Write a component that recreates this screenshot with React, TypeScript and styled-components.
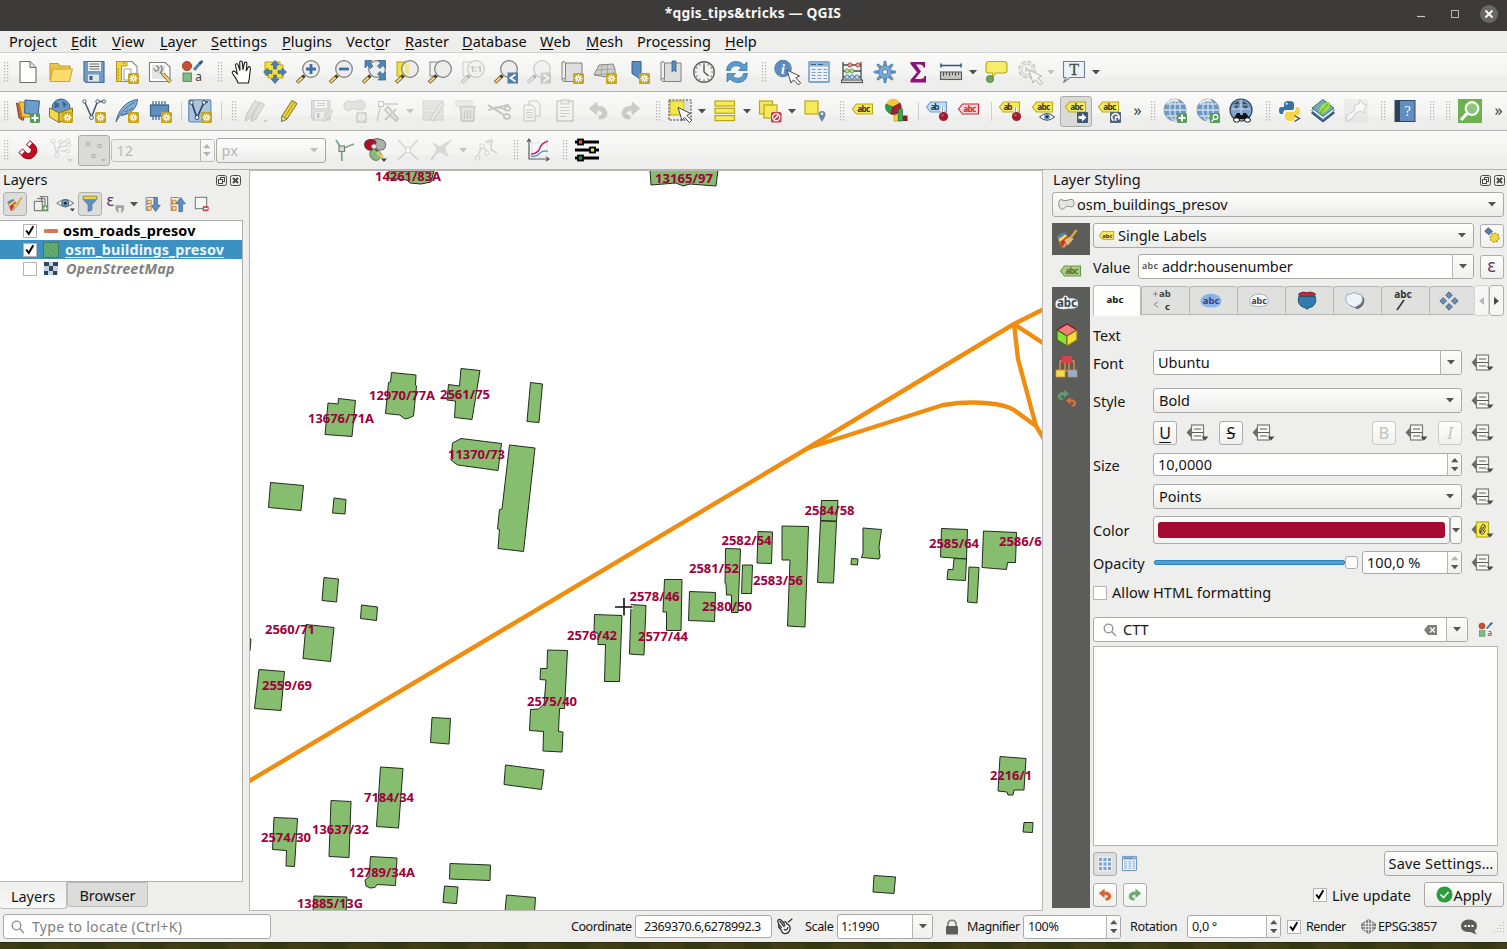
import React from "react";
import styled, { createGlobalStyle, css } from "styled-components";

const Global = createGlobalStyle`
  * { box-sizing: border-box; }
  html, body { margin: 0; padding: 0; overflow: hidden; }
  body { font-family: "Noto Sans", "Open Sans", sans-serif; font-size: 14.5px; color: #141414; background: #eeeeec; }
  svg { display: block; flex: none; overflow: visible; }
`;

/* ---------- window frame ---------- */

const Window = styled.div`
  width: 1507px;
  height: 949px;
  display: flex;
  flex-direction: column;
  background: #eeeeec;
  overflow: hidden;
`;

const TitleBar = styled.header`
  height: 31px;
  display: grid;
  grid-template-columns: 1fr auto 1fr;
  align-items: center;
  background: #3c3b39;
  color: #f6f6f4;
  padding: 0 8px 5px 0;
`;

const WindowTitle = styled.h1`
  grid-column: 2;
  margin: 0 0 0 7px;
  font-size: 13.8px;
  letter-spacing: 0.2px;
  line-height: 18px;
  font-weight: 700;
`;

const WindowButtons = styled.div`
  display: flex;
  justify-content: flex-end;
  align-items: center;
  height: 18px;
`;

const MenuBar = styled.nav`
  height: 22px;
  display: flex;
  align-items: center;
  padding: 0 0 2px 9px;
  border-bottom: 1px solid #d2d2d0;
`;

const MenuItem = styled.span<{ $w: number; $ls?: number }>`
  width: ${(p) => p.$w}px;
  white-space: nowrap;
  letter-spacing: ${(p) => p.$ls ?? 0}px;
  line-height: 20px;
  color: #0c0c0c;
  u { text-underline-offset: 2px; }
`;

/* ---------- toolbars ---------- */

const ToolBar = styled.div`
  height: 39px;
  display: flex;
  align-items: center;
  background: linear-gradient(#fafaf8, #f3f3f1 60%, #eeeeec 66%);
  border-bottom: 1px solid #b2b2b0;
`;

const Tool = styled.div<{ $pressed?: boolean; $off?: boolean }>`
  width: 33px;
  height: 32px;
  flex: none;
  display: flex;
  align-items: center;
  justify-content: center;
  ${(p) => p.$pressed && css`
    width: 32px;
    margin-right: 1px;
    height: 31px;
    background: #dadad8;
    border: 1px solid #acacaa;
    border-radius: 3px;
  `}
  > svg { opacity: ${(p) => (p.$off ? 0.36 : 1)}; ${(p) => p.$off && "filter: grayscale(1);"} }
`;

const GripSlot = styled.div<{ $first?: boolean }>`
  width: ${(p) => (p.$first ? 11.5 : 16)}px;
  padding-left: ${(p) => (p.$first ? 4 : 8)}px;
  flex: none;
`;

const ToolSeparator = styled.div`
  width: 3px;
  height: 19px;
  flex: none;
  border-left: 1px solid #cfcfcd;
  margin-left: 4px;
`;

const ArrowSlot = styled.div`
  width: 12px;
  flex: none;
  display: flex;
  justify-content: center;
  padding-right: 1px;
`;

const Overflow = styled.div`
  width: 17px;
  flex: none;
  font-size: 16px;
  line-height: 20px;
  padding: 0 0 3px 8px;
  color: #3c3c3c;
`;

const Grip = ({ first }: { first?: boolean }) => (
  <GripSlot $first={first}>
    <svg width="5" height="21" viewBox="0 0 5 21">
      {[0, 3, 6, 9, 12, 15, 18].map((y) => (
        <g key={y} fill="#b6b6b4"><rect x="0" y={y} width="1.2" height="1.4" /><rect x="3" y={y} width="1.2" height="1.4" /></g>
      ))}
    </svg>
  </GripSlot>
);

const Triangle = ({ w = 8, c = "#555553", up }: { w?: number; c?: string; up?: boolean }) => (
  <svg width={w} height={w / 2 + 0.5} viewBox="0 0 8 4.5"><path d={up ? "M0 4.5L4 0L8 4.5Z" : "M0 0L4 4.5L8 0Z"} fill={c} /></svg>
);

const Arrow = ({ off }: { off?: boolean }) => <ArrowSlot><Triangle c={off ? "#c4c4c2" : "#4c4c4a"} /></ArrowSlot>;

/* ---------- icon building blocks ---------- */

const Svg = ({ children, s = 24 }: { children?: React.ReactNode; s?: number }) => (
  <svg width={s} height={s} viewBox="0 0 24 24" fill="none">{children}</svg>
);

const Star = () => (
  <g><rect x="13" y="13" width="11" height="11" rx="1.5" fill="#c4a51c" />
    <path d="M18.5 14.5V22.5M14.5 18.5H22.5M15.7 15.7L21.3 21.3M21.3 15.7L15.7 21.3" stroke="#fff" strokeWidth="1.3" />
    <circle cx="18.5" cy="18.5" r="1" fill="#c4a51c" /></g>
);

const PlusBadge = () => (
  <g><rect x="14" y="14" width="10" height="10" rx="1.5" fill="#589a5c" /><path d="M19 15.5V22.5M15.5 19H22.5" stroke="#fff" strokeWidth="2" /></g>
);

const Lens = ({ children, fill = "#ececea" }: { children?: React.ReactNode; fill?: string }) => (
  <g><path d="M1 22.5L8.5 15.5" stroke="#4a4020" strokeWidth="3.6" /><path d="M1.3 22.2L6.5 17.4" stroke="#f3d675" strokeWidth="2.2" />
    <circle cx="15" cy="9" r="8.3" fill={fill} stroke="#7c7c7a" strokeWidth="1.2" />{children}</g>
);

const Tag = ({ fill = "#f6e95c", stroke = "#b9a81c", text = "abc", color = "#33332c" }: { fill?: string; stroke?: string; text?: string; color?: string }) => (
  <g><path d="M1.5 8L5.5 3H21.5V13H5.5Z" fill={fill} stroke={stroke} strokeWidth="1.1" />
    <text x={text === "ab" ? 10 : 12.8} y="10.9" fontSize="8.2" fontWeight="700" textAnchor="middle" textLength={text === "ab" ? 9 : 13} fill={color}>{text}</text></g>
);

const Pin = () => <g><path d="M17.5 15V8.5" stroke="#fff" strokeWidth="3.4" /><path d="M17.5 15V8.5" stroke="#999" strokeWidth="1.2" /><circle cx="18.5" cy="17.5" r="4.6" fill="#a01c2c" /><circle cx="17.4" cy="16.3" r="1.3" fill="#c85060" /></g>;

const Cursor = ({ x = 10, y = 9 }: { x?: number; y?: number }) => (
  <path transform={`translate(${x} ${y})`} d="M0 0L4 13L6.5 9.8L11.5 15L13.7 12.8L8.7 8L12.5 6Z" fill="#fff" stroke="#484846" strokeWidth="1" />
);

const Globe = ({ children }: { children?: React.ReactNode }) => (
  <Svg><circle cx="12" cy="11" r="11" fill="#6a98c8" stroke="#8e9aa6" strokeWidth="1" />
    <path d="M12 0.5V21.5M1 11H23M3.5 5H20.5M3.5 17H20.5" stroke="#d4dde6" strokeWidth="1.3" />
    <ellipse cx="12" cy="11" rx="5.3" ry="10.6" stroke="#d4dde6" strokeWidth="1.3" /><path d="M4 4Q10 0 15 2" stroke="#e9eef3" strokeWidth="2" />{children}</Svg>
);

const Palette = ({ s = 24 }: { s?: number }) => (
  <Svg s={s}><circle cx="6" cy="6" r="4.6" fill="#c8502c" stroke="#8e3a22" strokeWidth="0.8" /><path d="M13 10L20 2" stroke="#4f7fae" strokeWidth="3" />
    <path d="M18.5 3.8L21.5 1" stroke="#2f5880" strokeWidth="2.4" /><rect x="2" y="13" width="8.4" height="8.4" fill="#7fbc84" stroke="#4d8a53" strokeWidth="0.9" />
    <text x="14.2" y="21" fontSize="12" fill="#444" fontFamily="Noto Sans">a</text></Svg>
);

const Floppy = () => (
  <Svg><path d="M2 1.5H22V22.5H4L2 20.5Z" fill="#6f9cc8" stroke="#4d7098" strokeWidth="1.2" /><rect x="6" y="2" width="13" height="9" fill="#f2f2f0" />
    <path d="M7.5 4H17.5M7.5 6.5H17.5M7.5 9H17.5" stroke="#6c6c6a" strokeWidth="1" /><rect x="6" y="14.5" width="11" height="7" fill="#e4e4e2" /><rect x="7.5" y="16" width="3" height="4" fill="#3e5c7a" /></Svg>
);

const Brush = ({ s = 24 }: { s?: number }) => (
  <Svg s={s}><path d="M1 9L9 5L15 12L10 21L6 22Z" fill="#d8b06a" stroke="#9c5a30" strokeWidth="0.8" /><path d="M1 9L9 5L10.5 7L3 12Z" fill="#4d86c0" />
    <path d="M3 12L10.5 7L12 9L4.5 15Z" fill="#f0e13c" /><path d="M4.5 15L12 9L14 11L6 22Z" fill="#c8343c" /><path d="M9 13L16 9L19 12L13 19Z" fill="#e0bc78" /><path d="M15.5 11.5L22.5 2" stroke="#dca83c" strokeWidth="2.6" /></Svg>
);

const Table = ({ s = 24 }: { s?: number }) => (
  <Svg s={s}><rect x="2" y="2" width="20" height="20" rx="0.5" fill="#eaf2fa" stroke="#5c8cbc" strokeWidth="1.3" /><rect x="2.5" y="2.5" width="19" height="4" fill="#8db6de" />
    <path d="M4 4.5H9M11 4.5H16" stroke="#35608c" strokeWidth="1" /><path d="M4.5 9.5H8.5M4.5 12.5H8.5M4.5 15.5H8.5M4.5 18.5H8.5M10.5 9.5H14.5M10.5 12.5H14.5M10.5 15.5H14.5M10.5 18.5H14.5M16.5 9.5H20M16.5 12.5H20M16.5 15.5H20M16.5 18.5H20" stroke="#7c9cc0" strokeWidth="1.2" /></Svg>
);

const Undo = ({ c = "#d9622e", s = 24, flip }: { c?: string; s?: number; flip?: boolean }) => (
  <Svg s={s}><path transform={flip ? "translate(24 0) scale(-1 1)" : undefined} d="M3 9.5L11 3V7C18 7 21 10 21 14.5C21 18 18 20 13 20V16.5C15.5 16.5 16.5 15.5 16.5 14C16.5 12.3 14.5 11.8 11 11.8V16Z" fill={c} stroke={c} strokeWidth="0.6" /></Svg>
);

const Pencil = () => (
  <g><path d="M5 17L15 1.5L20 4.5L10 20L4.5 22.5Z" fill="#efd83a" stroke="#6e6a30" strokeWidth="1" /><path d="M7.5 18.5L17.5 3" stroke="#b9a326" strokeWidth="1.3" /><path d="M5 17L10 20L4.5 22.5Z" fill="#f5e3b8" stroke="#6e6a30" strokeWidth="0.8" /></g>
);

const Scroll = ({ children }: { children?: React.ReactNode }) => (
  <Svg><path d="M2 2.5Q4 0.5 5.5 3H22V21.5H5.500Z" fill="#dededc" stroke="#82827f" strokeWidth="1" /><path d="M2 2.500Q4 0.500 5.500 3V18.500Q3 17.500 2 20Z" fill="#f0f0ee" stroke="#82827f" strokeWidth="1" /><path d="M2 20Q3 22 5.500 21.500" stroke="#82827f" />{children}</Svg>
);

const BlueArrows = ({ c = "#4f7fb4" }: { c?: string }) => (
  <path d="M12 0.5L16 5H13.5V9H10.5V5H8ZM12 23.5L16 19H13.5V15H10.5V19H8ZM0.5 12L5 8V10.5H9V13.5H5V16ZM23.5 12L19 8V10.5H15V13.5H19V16Z" fill={c} stroke="#35567c" strokeWidth="0.6" />
);

const Chip = () => (
  <Svg><rect x="2.5" y="6" width="18" height="11" fill="#5f8ec0" stroke="#35608c" strokeWidth="1.2" /><path d="M5 2V6M8 2V6M11 2V6M14 2V6M17 2V6M5 17V21M8 17V21M11 17V21" stroke="#35608c" strokeWidth="1.2" /><Star /></Svg>
);

const VLine = () => (
  <g><path d="M2.5 2.5L9.5 18L15.5 2.5H22" stroke="#46586c" strokeWidth="1.5" /><circle cx="2.5" cy="2.5" r="1.7" fill="#fff" stroke="#46586c" /><circle cx="9.5" cy="18.5" r="1.9" fill="#fff" stroke="#46586c" /><circle cx="15.5" cy="2.5" r="1.7" fill="#fff" stroke="#46586c" /><circle cx="22" cy="2.5" r="1.6" fill="#fff" stroke="#46586c" /></g>
);

/* ---------- toolbar contents ---------- */

const FileTools = () => (
  <>
    <Tool><Svg><path d="M4 1.5H14L20 7.5V22.5H4Z" fill="#fff" stroke="#6e6e6c" strokeWidth="1.1" /><path d="M14 1.5V7.5H20" fill="#dcdcda" stroke="#6e6e6c" /></Svg></Tool>
    <Tool><Svg><path d="M1 20V3.5H9L11 6H21V9" fill="#e9c44e" stroke="#c79c2c" strokeWidth="1.1" /><path d="M1.2 21.5L4 9H23.3L20.5 21.5Z" fill="#fbdc6c" stroke="#cfa436" strokeWidth="1.1" /></Svg></Tool>
    <Tool><Floppy /></Tool>
    <Tool><Svg><path d="M1.5 1.5H17L22 6.5V21.5H1.5Z" fill="#fff" stroke="#8a8a88" strokeWidth="1.1" /><path d="M1.5 1.5H12V6H6.5V21.5H1.5Z" fill="#f0d246" stroke="#b99a20" /><path d="M2 9H4M2 12H4M2 15H4M2 18H4M9 2V4" stroke="#8a7420" strokeWidth="0.8" /><path d="M9 9H16V20H9Z" stroke="#9c9c9a" fill="#fff" /><Star /></Svg></Tool>
    <Tool><Svg><path d="M1.5 2.5H17L22 7V21.5H1.5Z" fill="#fff" stroke="#7e7e7c" strokeWidth="1.1" /><rect x="4" y="5" width="13" height="14" fill="#e4e4e2" /><path d="M8.500 5.500L11 8L10 10.500L7.500 11L5.500 8.500" stroke="#7c7c7a" strokeWidth="1.2" /><path d="M12.500 5.500A4.500 4.500 0 0 1 12.500 12.500L15 15" stroke="#7c7c7a" strokeWidth="1.500" /><path d="M15 14L22.5 22" stroke="#8a6c20" strokeWidth="3.800" /><path d="M15 14L22.3 21.800" stroke="#ecd070" strokeWidth="2.400" /></Svg></Tool>
    <Tool><Palette /></Tool>
  </>
);

const NavTools = () => (
  <>
    <Tool><Svg><path d="M8 23C7 19.500 5 17 2.500 13.500C1.500 11.300 4 10.300 5.500 12L7.500 14.500L5.500 5.500C5.200 3.500 7.600 3 8.200 5L10 10.500L9.700 2.500C9.700 0.500 12.200 0.500 12.400 2.500L13 10L14.300 3.300C14.700 1.400 17 1.900 16.900 3.800L16.200 11L18 7.500C18.800 6 20.800 6.800 20.400 8.600C19.700 13 20 18 18.300 23Z" fill="#fff" stroke="#1c1c1c" strokeWidth="1.1" /></Svg></Tool>
    <Tool><Svg><path d="M2 2H17V5H20V18H5V15H2Z" fill="#f3e03c" stroke="#b5a21a" /><BlueArrows /></Svg></Tool>
    <Tool><Svg><Lens><path d="M15 4V14M10 9H20" stroke="#3d6ea4" strokeWidth="2.8" /></Lens></Svg></Tool>
    <Tool><Svg><Lens><path d="M10 9H20" stroke="#3d6ea4" strokeWidth="2.8" /></Lens></Svg></Tool>
    <Tool><Svg><Lens /><path d="M3 0.5H10L8 3L11 6L8.5 8.5L5.5 5.5L3 8ZM23.5 0.5V8L21 5.5L18 8.5L15.5 6L18.5 3L16 0.5ZM23.5 20V12L21 14.5L18 11.5L15.5 14L18.5 17L16 20Z" fill="#4f86b8" stroke="#2f5c8c" strokeWidth="0.7" /></Svg></Tool>
    <Tool><Svg><rect x="2" y="2" width="9" height="14" fill="#f3e03c" stroke="#b5a21a" /><Lens><path d="M10 3.5H14V14.5H10Z" fill="#f3e78a" /></Lens></Svg></Tool>
    <Tool><Svg><rect x="2" y="2" width="9" height="14" fill="#f0f0ee" stroke="#8a8a88" /><Lens /></Svg></Tool>
    <Tool $off><Svg><rect x="2" y="2" width="9" height="14" fill="#f0f0ee" stroke="#8a8a88" /><Lens><text x="15" y="12.3" fontSize="8.5" fontWeight="700" fill="#555" textAnchor="middle">1:1</text></Lens></Svg></Tool>
    <Tool><Svg><Lens /><rect x="13.5" y="12.5" width="10.5" height="11" fill="#4d7fb0" /><path d="M21.5 14.5L16.5 18L21.5 21.5" stroke="#fff" strokeWidth="1.8" /></Svg></Tool>
    <Tool $off><Svg><Lens /><rect x="13.5" y="12.5" width="10.5" height="11" fill="#8a8a88" /><path d="M16.5 14.5L21.5 18L16.5 21.5" stroke="#fff" strokeWidth="1.8" /></Svg></Tool>
    <Tool><Scroll><Star /></Scroll></Tool>
    <Tool><Svg><path d="M1 15L6 5L20 4L22 9V16L14 17Z" fill="#cfcfcd" stroke="#82827f" /><path d="M4 10L21 9M9 5L8 15M14 5L15 16M1 15L21 13" stroke="#9a9a98" strokeWidth="0.8" /><Star /></Svg></Tool>
    <Tool><Svg><path d="M6 1.5H15V20L10.5 16.5L6 13.5Z" fill="#5a8cc0" stroke="#35608c" /><Star /></Svg></Tool>
    <Tool><Scroll><path d="M13 1H17V12L15 10L13 12Z" fill="#5a8cc0" stroke="#35608c" strokeWidth="0.8" /></Scroll></Tool>
    <Tool><Svg><circle cx="12" cy="12" r="10.3" fill="#f4f4f2" stroke="#62625f" strokeWidth="1.4" /><path d="M12 4.5V12L16.5 16" stroke="#484846" strokeWidth="1.3" />{[0, 30, 60, 90, 120, 150, 180, 210, 240, 270, 300, 330].map((a) => <rect key={a} x="11.5" y="3" width="1" height="1.6" fill="#62625f" transform={`rotate(${a} 12 12)`} />)}</Svg></Tool>
    <Tool><Svg><path d="M1.5 10.5C2 4.5 6 1.5 11 1.5C14.5 1.5 17 2.7 19 5L22 2V10.5H13.5L16.2 7.8C14.8 6.4 13 5.8 11 5.8C8 5.8 6 7.5 5.5 10.5Z" fill="#5c9acc" stroke="#2f6ea4" strokeWidth="0.7" /><path d="M22.5 13.5C22 19.5 18 22.5 13 22.5C9.5 22.5 7 21.3 5 19L2 22V13.5H10.5L7.8 16.2C9.2 17.6 11 18.2 13 18.2C16 18.2 18 16.5 18.5 13.5Z" fill="#5c9acc" stroke="#2f6ea4" strokeWidth="0.7" /></Svg></Tool>
  </>
);

const AttributeTools = () => (
  <>
    <Tool><Svg><circle cx="9" cy="8.5" r="8.3" fill="#5b8bbf" stroke="#47729f" strokeWidth="0.8" /><text x="9" y="13.6" fontSize="14" fontWeight="700" fontStyle="italic" fill="#fff" textAnchor="middle" fontFamily="Liberation Serif">i</text><Cursor x={13} y={10} /></Svg></Tool>
    <Tool><Table /></Tool>
    <Tool><Svg><path d="M3 2V20M21 2V20M3 5H21M3 11H21M3 17H21" stroke="#4a4a48" strokeWidth="1.3" /><rect x="1.5" y="20" width="21" height="2.6" fill="#d8d8d6" stroke="#4a4a48" /><g fill="#f0a0a0" stroke="#a83c3c" strokeWidth="0.9"><circle cx="10" cy="5" r="2.1" /><circle cx="18" cy="5" r="2.1" /></g><g fill="#b4dca0" stroke="#5c9c4c" strokeWidth="0.9"><circle cx="7" cy="11" r="2.1" /><circle cx="12" cy="11" r="2.1" /></g><g fill="#c0d8ee" stroke="#4c7cac" strokeWidth="0.9"><circle cx="7" cy="17" r="2.1" /><circle cx="12" cy="17" r="2.1" /><circle cx="17" cy="17" r="2.1" /></g></Svg></Tool>
    <Tool><Svg>{[0, 45, 90, 135, 180, 225, 270, 315].map((a) => <path key={a} d="M10.500 6L11.200 1.300H12.800L13.500 6Z" fill="#6d9fd2" stroke="#44709e" strokeWidth="0.8" transform={`rotate(${a} 12 12)`} />)}<circle cx="12" cy="12" r="6.300" fill="#7aa9d8" stroke="#44709e" strokeWidth="0.6" /><circle cx="12" cy="12" r="2.5" fill="#eef3f8" stroke="#44709e" strokeWidth="0.9" /></Svg></Tool>
    <Tool><Svg><path d="M4.5 2H19V7.5H17.5C17 5.5 16 4.5 14 4.5H10L15 11.5L9 19H15C17 19 18 18 18.5 16H20V22.5H4.5V20L11 12.3L4.5 4Z" fill="#8a1478" /></Svg></Tool>
    <Tool><Svg><path d="M2 5.5H22M2 3.5V7.5M22 3.5V7.5" stroke="#33557c" strokeWidth="1.5" /><rect x="1.5" y="12" width="21" height="7.5" fill="#c4c4c2" stroke="#5a5a58" strokeWidth="1.1" /><path d="M4.5 12.5V16M7.5 12.5V15M10.5 12.5V16M13.5 12.5V15M16.5 12.5V16M19.5 12.5V15" stroke="#4a4a48" /></Svg></Tool>
    <Arrow />
    <Tool><Svg><path d="M5 1.5H20Q23 1.5 23 4.5V10Q23 13 20 13H12L8 18L9 13H5Q2 13 2 10V4.5Q2 1.5 5 1.5Z" fill="#f8ec6e" stroke="#b9a81c" strokeWidth="1.1" /><circle cx="6" cy="19" r="3.6" fill="#6ca65c" stroke="#4c7c40" strokeWidth="0.8" /></Svg></Tool>
    <Tool $off><Svg><circle cx="10" cy="9.5" r="8" fill="#cfcfcd" stroke="#8a8a88" strokeWidth="2" strokeDasharray="4 2.3" /><circle cx="10" cy="9.5" r="5" fill="#f6f6f4" stroke="#8a8a88" /><path d="M8 6.5L13 9.5L8 12.5Z" fill="#8a8a88" /><Cursor x={12} y={10} /></Svg></Tool>
    <Arrow off />
    <Tool><Svg><path d="M1.5 1.5H22.5V17.5H8L1.5 22.5L4 17.5H1.5Z" fill="#edf2f6" stroke="#72808c" strokeWidth="1.1" /><text x="12.2" y="14.5" fontSize="16" fill="#484846" stroke="#484846" strokeWidth="0.3" textAnchor="middle" fontFamily="Liberation Serif">T</text></Svg></Tool>
    <Arrow />
  </>
);

const DataTools = () => (
  <>
    <Tool><Svg><path d="M0.5 4L11 9L7 21.5L3 19Z" fill="#c8603a" stroke="#8e4022" /><path d="M3 3H14V18H6Z" fill="#e9c63c" stroke="#a88a1c" /><path d="M9 1L23.5 2L22 16L8.5 14Z" fill="#6c9ccc" stroke="#35608c" /><PlusBadge /></Svg></Tool>
    <Tool><Svg><circle cx="12" cy="9" r="9" fill="#6a96c4" stroke="#35608c" /><path d="M6 3Q11 4 10 8L5 9M13 2L18 5L15 9" fill="#3d6390" /><path d="M0.5 9L10 14V23.5L0.5 18Z" fill="#f3d94c" stroke="#8a7420" /><path d="M10 14L23.5 9V18L10 23.5Z" fill="#e2c038" stroke="#8a7420" /><Star /></Svg></Tool>
    <Tool><Svg><VLine /><Star /></Svg></Tool>
    <Tool><Svg><path d="M1 23C3 12 10 2 22.5 0.5C22 9 16 15 6 16.5" fill="#84b0d8" stroke="#3f6890" strokeWidth="1" /><path d="M1 23C5 14 12 7 20 3M10 13L18 9M7 16L13 14" stroke="#3f6890" strokeWidth="0.9" /><Star /></Svg></Tool>
    <Tool><Chip /></Tool>
    <ToolSeparator />
    <Tool><Svg><rect x="0.8" y="0.8" width="22" height="22" rx="1.5" fill="#a9c5df" stroke="#6a90b4" strokeWidth="1.3" /><path d="M3.500 3L9 19L16 3L20 3" stroke="#2f4760" strokeWidth="1.7" /><circle cx="3.5" cy="3.5" r="1.8" fill="#fff" stroke="#2f4760" /><circle cx="9" cy="18.5" r="2" fill="#fff" stroke="#2f4760" /><circle cx="16" cy="3.5" r="1.8" fill="#fff" stroke="#2f4760" /><Star /></Svg></Tool>
    <ToolSeparator />
  </>
);

const EditTools = () => (
  <>
    <Tool $off><Svg><g fill="#b8b8b6" stroke="#777" strokeWidth="1"><path d="M2 16L11 1.5L15.5 4L6.5 19L1.5 22Z" /><path d="M8 17L16 3L20.5 5.5L12 20L7.5 22.5Z" /></g><path d="M19 21H24L21.5 23.8Z" fill="#999" /></Svg></Tool>
    <Tool><Svg><Pencil /></Svg></Tool>
    <Tool $off><Svg><path d="M1.5 1.5H20V21H3.5L1.5 19Z" fill="#b0b0ae" stroke="#888" /><rect x="5" y="2" width="12" height="7" fill="#f2f2f0" /><path d="M7 4.5H15M7 6.5H15" stroke="#888" /><rect x="5" y="13" width="9" height="7.5" fill="#e9e9e7" /><rect x="7" y="14" width="2.5" height="5" fill="#777" /><path d="M13 21L21 10L23 12L15 22.5Z" fill="#d0d0ce" stroke="#888" /></Svg></Tool>
    <Tool $off><Svg><path d="M2 10C-1 5 3 1 8 2.5C12 4 14 1 18 1.5C24 3 23 11 18 11C14 11 13 9 9 10C6 11.5 4 12.5 2 10Z" fill="#c4c4c2" stroke="#8e8e8c" /><Star /></Svg></Tool>
    <Tool $off><Svg><path d="M5 5L1 22M5 5H22" stroke="#888" strokeWidth="1.3" /><rect x="2.5" y="2.5" width="5" height="5" fill="#fff" stroke="#777" /><path d="M9 11L12 8L22 20L20 22ZM20 10L9 21" stroke="#888" strokeWidth="2.2" /></Svg></Tool>
    <Arrow off />
    <Tool $off><Svg><g fill="#cfcfbb" stroke="#a0a08c"><rect x="2" y="2" width="20" height="5" /><rect x="2" y="9" width="20" height="5" /><rect x="2" y="16" width="20" height="5" /></g><path d="M9 20L20 3L23 5L12 22Z" fill="#d8d8d6" stroke="#888" /></Svg></Tool>
    <Tool $off><Svg><rect x="2" y="2" width="16" height="5" fill="#ddd" stroke="#aaa" /><path d="M5 8H22M6.5 9L7.5 22H19.5L20.5 9" fill="#d4cccc" stroke="#907c7c" strokeWidth="1.5" /><path d="M10.5 11V20M13.5 11V20M16.5 11V20" stroke="#907c7c" strokeWidth="1.3" /></Svg></Tool>
    <Tool $off><Svg><path d="M1 6L17 16M1 11L22 5.500" stroke="#666" strokeWidth="1.8" /><ellipse cx="20" cy="17.500" rx="3.200" ry="2.400" stroke="#666" strokeWidth="1.500" /><ellipse cx="20.500" cy="9.500" rx="2.800" ry="2.200" stroke="#666" strokeWidth="1.500" /><path d="M8 8L18 10" stroke="#666" strokeWidth="1.300" /></Svg></Tool>
    <Tool $off><Svg><path d="M9 2H17L20 5V17H9Z" fill="#f4f4f2" stroke="#777" /><path d="M4 6H12L15 9V22H4Z" fill="#f8f8f6" stroke="#777" /><path d="M6 11H13M6 13.5H13M6 16H13M6 18.5H13" stroke="#888" /></Svg></Tool>
    <Tool $off><Svg><rect x="4" y="2" width="16" height="20" fill="#f4f4f2" stroke="#777" strokeWidth="1.3" /><rect x="8" y="1" width="8" height="4" fill="#ddd" stroke="#777" /><path d="M7 8.5H17M7 11.5H17M7 14.5H17M7 17.5H13" stroke="#888" /></Svg></Tool>
    <Tool $off><Undo c="#828280" /></Tool>
    <Tool $off><Undo c="#828280" flip /></Tool>
  </>
);

const SelectTools = () => (
  <>
    <Tool><Svg><rect x="1" y="1" width="22" height="20" stroke="#333" strokeWidth="1.1" strokeDasharray="2 1.4" /><rect x="2" y="2" width="14" height="14" fill="#f3e64c" stroke="#b9a81c" /><rect x="16.5" y="2" width="5" height="12" fill="#dededc" /><Cursor x={10} y={8.5} /></Svg></Tool>
    <Arrow />
    <Tool><Svg><g fill="#f6e95c" stroke="#b9a81c" strokeWidth="1.2"><rect x="2" y="2" width="19.5" height="5" /><rect x="2" y="9.3" width="19.5" height="5" /><rect x="2" y="16.6" width="19.5" height="5" /></g></Svg></Tool>
    <Arrow />
    <Tool><Svg><g fill="#f6e95c" stroke="#b9a81c" strokeWidth="1.2"><rect x="1.5" y="2" width="13" height="13" /><rect x="6" y="6" width="13" height="13" /></g><rect x="13" y="13" width="10.5" height="10.5" rx="1.5" fill="#c8404c" /><circle cx="18.2" cy="18.2" r="3.5" stroke="#fff" strokeWidth="1.3" /><path d="M15.8 20.6L20.6 15.8" stroke="#fff" strokeWidth="1.3" /></Svg></Tool>
    <Arrow />
    <Tool><Svg><rect x="2" y="2" width="13" height="13" fill="#f6e95c" stroke="#b9a81c" strokeWidth="1.2" /><path d="M19 23C16.5 18.5 15.5 17 15.5 15A3.6 3.6 0 0 1 22.6 15C22.6 17 21.5 18.5 19 23Z" fill="#6a8aa4" /><circle cx="19" cy="14.8" r="1.3" fill="#fff" /></Svg></Tool>
  </>
);

const LabelTools = () => (
  <>
    <Tool><Svg><g transform="translate(-1 2)"><Tag /></g></Svg></Tool>
    <Tool><Svg><path d="M8 8L1 5A7.5 7.5 0 0 1 15 4Z" fill="#f3c83c" /><path d="M8 8L1 5A7.5 7.5 0 0 0 6 15Z" fill="#2f9a48" stroke="#1c6c30" strokeWidth="0.7" /><path d="M8 8L15 4A7.5 7.5 0 0 1 6 15Z" fill="#a8202c" stroke="#701018" strokeWidth="0.7" /><rect x="9" y="16" width="4" height="6" fill="#f3dc3c" stroke="#b9901c" strokeWidth="0.7" /><rect x="13.5" y="10" width="4" height="12" fill="#3ca850" stroke="#1c6c30" strokeWidth="0.7" /><rect x="18" y="16.500" width="4.5" height="5.500" fill="#8c1824" /></Svg></Tool>
    <ToolSeparator />
    <Tool><Svg><Tag fill="#c0dcf4" stroke="#6c9ccc" text="ab" /><Pin /></Svg></Tool>
    <Tool><Svg><g transform="translate(-1 2)"><Tag fill="#fbd8d8" stroke="#c42438" color="#c42438" /></g></Svg></Tool>
    <ToolSeparator />
    <Tool><Svg><Tag text="ab" /><Pin /></Svg></Tool>
    <Tool><Svg><Tag /><path d="M8.5 18Q16 11 23.5 18Q16 24.5 8.5 18Z" fill="#fff" stroke="#3c4a58" /><circle cx="16" cy="17.8" r="3.1" fill="#6c9ccc" /><circle cx="16" cy="17.8" r="1.4" fill="#1c2c40" /></Svg></Tool>
    <Tool $pressed><Svg><Tag /><rect x="13" y="13" width="11" height="11" rx="1" fill="#3f5a74" /><path d="M14.5 17H18V14.5L22.5 18.5L18 22.5V20H14.5Z" fill="#fff" /></Svg></Tool>
    <Tool><Svg><Tag /><rect x="13" y="13" width="11" height="11" rx="1" fill="#4f6478" /><path d="M16.5 21.5A3.7 3.7 0 1 1 21.5 20.5M18.5 22V18H21.5" stroke="#fff" strokeWidth="1.6" /></Svg></Tool>
  </>
);

const WebTools = () => (
  <>
    <Tool><Globe><PlusBadge /></Globe></Tool>
    <Tool><Globe><rect x="14" y="14" width="10" height="10" rx="1" fill="#589a5c" /><circle cx="19.5" cy="18" r="2.3" stroke="#fff" strokeWidth="1.2" /><path d="M18 20L15.5 22.5" stroke="#fff" strokeWidth="1.4" /></Globe></Tool>
    <Tool><Svg><circle cx="12" cy="11" r="11" fill="#7fa3cc" stroke="#33475c" strokeWidth="1.2" /><path d="M4 5L9 2L11 6L7 10ZM14 2L20 6L17 10L13 7Z" fill="#33506e" /><path d="M3 10H21M12 1V14M4 6H20" stroke="#d4dde6" strokeWidth="0.8" /><path d="M4 21L8 14H11V16H14V14H17L22 21Q18 25 14.500 20H11Q8 25 4 21Z" fill="#111" /><ellipse cx="7.5" cy="21" rx="3" ry="2.2" fill="#fff" stroke="#111" /><ellipse cx="18.5" cy="21" rx="3" ry="2.2" fill="#fff" stroke="#111" /></Svg></Tool>
  </>
);

const PluginTools = () => (
  <>
    <Tool><Svg><path d="M6 9V5Q6 2 11 2Q16 2 16 5V9Q16 11 14 11H8Q5 11 5 15H3Q1 15 1 11Q1 8 4 8H11" fill="#3a70a4" /><path d="M17 14V18Q17 22 12 22Q7 22 7 18V15Q7 13 9 13H15Q18 13 18 8H19Q22 8 22 12Q22 16 19 16H12" fill="#f8d548" /><circle cx="8.7" cy="4.7" r="1" fill="#fff" /><path d="M16.5 16.5L21.5 19.5L16.5 22.5" stroke="#4a4a48" strokeWidth="1.3" /></Svg></Tool>
    <Tool><Svg><path d="M0.5 14L12 23L23.5 14L12 7Z" fill="#35608c" stroke="#2c4c6c" /><path d="M0.5 11.5L12 20.5L23.5 11.5L12 4Z" fill="#f4f4f2" stroke="#5a7a9a" /><path d="M1 9L12 17.5L23 9L12 0.5Z" fill="#78a8b4" stroke="#35806c" /><path d="M8 13Q8 4 19 3Q20 12 11 14Z" fill="#9cdc44" /><path d="M9 14L17 5" stroke="#5aa020" /></Svg></Tool>
    <Tool $off><Svg><rect width="24" height="24" fill="#dcdcda" /><path d="M2 22L3 16L10 12L11 6L15 5L16 1L19 5L23 6L20 10L21 14L16 12L12 14L8 20Z" fill="#fff" stroke="#8a8a88" /></Svg></Tool>
  </>
);

const SnapTools = () => (
  <>
    <Tool><Svg><path d="M12 4.500L17.500 9.500A6 6 0 0 1 9.500 17.500L4.500 12.500" stroke="#7c0814" strokeWidth="6" /><path d="M12.500 5L17.500 9.500A6 6 0 0 1 9.500 17.500L5 13" stroke="#c80c20" strokeWidth="4.600" /><path d="M12.500 5L14.500 6.800M5 13L7 15" stroke="#fff" strokeWidth="4.400" /></Svg></Tool>
    <Tool $off><Svg><path d="M4 3L8 16L12 4L18 3M8 10L20 7M12 13L20 13" stroke="#a4a4a2" strokeWidth="1.4" /><g fill="#fff" stroke="#999"><circle cx="4" cy="3" r="2" /><circle cx="8" cy="17" r="2" /><circle cx="12" cy="4" r="2" /><circle cx="19" cy="3" r="2" /><circle cx="20" cy="7" r="1.8" /><circle cx="19" cy="13" r="1.8" /></g><path d="M18 21H24L21 24Z" fill="#999" /></Svg></Tool>
    <Tool $pressed $off><Svg><g fill="#dedede" stroke="#666"><rect x="4.5" y="4.5" width="3" height="3" /><rect x="16" y="6.5" width="3" height="3" /><rect x="10" y="16.5" width="3" height="3" /></g><path d="M19 21H24L21.5 23.8Z" fill="#777" /></Svg></Tool>
  </>
);

const TopologyTools = () => (
  <>
    <Tool><Svg><path d="M6 2L11.5 11L24 6M11.5 11L12 23" stroke="#7fa88a" strokeWidth="1.8" /><rect x="9" y="8" width="5.5" height="5.5" fill="#d4dcd6" stroke="#7a7a78" strokeWidth="1.1" /></Svg></Tool>
    <Tool><Svg><path d="M8 2Q14 -1 20 2Q25 6 21 11Q16 14 12 9Z" fill="#b0b0ae" stroke="#666" /><path d="M7 14Q10 9 15 12L19 17Q16 24 11 22Q6 20 7 14Z" fill="#8cb882" stroke="#5c7c54" /><path d="M2 9Q0 2 7 1.500Q13 1 13 5L9 12Q4 13 2 9Z" fill="#b40c24" stroke="#444" /><path d="M9 8L19 18" stroke="#555" strokeWidth="1.2" /><circle cx="11" cy="8.500" r="2.400" fill="#f4f4f2" stroke="#888" /><path d="M14 14L20 20" stroke="#e2c860" strokeWidth="3" /><path d="M18 20.5H24L21 24Z" fill="#444" /></Svg></Tool>
    <Tool $off><Svg><path d="M2 2L22 22M22 2L2 22" stroke="#999" strokeWidth="1.6" /><rect x="9.5" y="9.5" width="5" height="5" fill="#fff" stroke="#999" /></Svg></Tool>
    <Tool $off><Svg><path d="M2 22L7 15M22 2L15 9" stroke="#999" strokeWidth="1.6" /><path d="M4 5L11 9L18 4L16 11L19 18L11 14L6 16L8 11Z" fill="#b4a898" stroke="#999" strokeWidth="0.8" /></Svg></Tool>
    <Arrow off />
    <Tool $off><Svg><path d="M3 21L8 7L14 15" stroke="#999" strokeWidth="1.4" /><path d="M11 4L18 2L17 12L23 15" fill="#d4ccc0" stroke="#999" strokeWidth="1.4" /><g fill="#fff" stroke="#999"><circle cx="3.5" cy="20" r="2.2" /><circle cx="8" cy="8" r="2.2" /><circle cx="13" cy="15" r="2.2" /></g></Svg></Tool>
  </>
);

/* ---------- common form widgets ---------- */

const fieldBase = css`
  border: 1px solid #a9a9a7;
  border-radius: 3px;
  display: flex;
  align-items: center;
`;

const Combo = styled.div<{ $w?: number; $h?: number; $off?: boolean }>`
  ${fieldBase}
  width: ${(p) => (p.$w ? `${p.$w}px` : "auto")};
  height: ${(p) => p.$h ?? 25}px;
  flex: none;
  padding: 0 7px 0 5px;
  background: linear-gradient(#fefefd, #ececea);
  color: ${(p) => (p.$off ? "#b9b9b7" : "#141414")};
  > :last-child { margin-left: auto; }
`;

const Field = styled.div<{ $w?: number; $h?: number; $off?: boolean; $pad?: number }>`
  ${fieldBase}
  ${(p) => (p.$w ? `width: ${p.$w}px; flex: none;` : "flex: 1;")}
  height: ${(p) => p.$h ?? 25}px;
  padding-left: ${(p) => p.$pad ?? 4}px;
  background: ${(p) => (p.$off ? "#efefed" : "#fff")};
  color: ${(p) => (p.$off ? "#b9b9b7" : "#141414")};
  border-color: ${(p) => (p.$off ? "#bdbdbb" : "#a9a9a7")};
  white-space: nowrap;
`;

const Value = styled.span<{ $ls?: number }>`
  padding-bottom: 2px;
  letter-spacing: ${(p) => p.$ls ?? 0}px;
  white-space: nowrap;
`;

const FieldEnd = styled.div<{ $w: number }>`
  width: ${(p) => p.$w}px;
  height: 100%;
  margin-left: auto;
  flex: none;
  border-left: 1px solid #b4b4b2;
  border-radius: 0 2px 2px 0;
  background: linear-gradient(#fcfcfb, #f0f0ee);
  display: flex;
  flex-direction: column;
  align-items: center;
  justify-content: center;
  gap: 4px;
`;

const SpinEnd = ({ w = 14, off, upOff }: { w?: number; off?: boolean; upOff?: boolean }) => (
  <FieldEnd $w={w}><Triangle w={7.5} up c={off || upOff ? "#b4b4b2" : "#555553"} /><Triangle w={7.5} c={off ? "#b4b4b2" : "#555553"} /></FieldEnd>
);

const SquareButton = styled.div<{ $pressed?: boolean; $off?: boolean; $h?: number }>`
  ${fieldBase}
  width: 24px;
  height: ${(p) => p.$h ?? 24}px;
  flex: none;
  justify-content: center;
  background: ${(p) => (p.$pressed ? "#dededc" : "linear-gradient(#fefefd, #f0f0ee)")};
  border-color: ${(p) => (p.$off ? "#cacac8" : "#adadab")};
  color: ${(p) => (p.$off ? "#c0c0be" : "#141414")};
  font-size: 16px;
  > u, > s, > i, > b { padding-bottom: 1px; font-weight: 400; text-underline-offset: 3px; }
`;

const TextButton = styled.div<{ $w: number }>`
  ${fieldBase}
  width: ${(p) => p.$w}px;
  height: 25px;
  justify-content: center;
  background: linear-gradient(#fefefd, #ececea);
  white-space: nowrap;
`;

const Box = styled.span`
  width: 14px;
  height: 14px;
  flex: none;
  border: 1px solid #b4b4b2;
  background: #fff;
  display: inline-flex;
  align-items: center;
  justify-content: center;
`;

const Check = ({ on }: { on?: boolean }) => (
  <Box>{on && <svg width="10" height="11" viewBox="0 0 10 11"><path d="M1.2 5.5L3.8 9L8.3 1.2" stroke="#000" strokeWidth="2" fill="none" /></svg>}</Box>
);

const PanelHeader = styled.div`
  height: 22px;
  display: flex;
  align-items: center;
  letter-spacing: 0.05px;
  padding-top: 1px;
`;

const PanelControls = styled.div`
  margin-left: auto;
  display: flex;
  gap: 3px;
  padding-bottom: 2px;
`;

const DockButtons = () => (
  <PanelControls>
    <svg width="11" height="11" viewBox="0 0 11 11" fill="none" stroke="#4a4a48"><rect x="0.5" y="0.5" width="10" height="10" rx="2" /><rect x="4.5" y="2.5" width="4" height="4" /><rect x="2.5" y="4.5" width="4" height="4" fill="#eee" /></svg>
    <svg width="11" height="11" viewBox="0 0 11 11" fill="none" stroke="#4a4a48"><rect x="0.5" y="0.5" width="10" height="10" rx="2" /><path d="M3 3L8 8M8 3L3 8" strokeWidth="2" /></svg>
  </PanelControls>
);

const PanelTitle = styled.span`
  padding-bottom: 5px;
`;

/* ---------- main area ---------- */

const Main = styled.main`
  height: 741px;
  display: flex;
`;

const LayersPanel = styled.aside`
  width: 243px;
  display: flex;
  flex-direction: column;
`;

const LayersTools = styled.div`
  height: 28px;
  display: flex;
  align-items: center;
  padding: 0 0 4px 3px;
`;

const SmallTool = styled.div<{ $w: number; $pressed?: boolean }>`
  width: ${(p) => p.$w}px;
  height: 24px;
  display: flex;
  align-items: center;
  justify-content: center;
  ${(p) => p.$pressed && css`background: #dcdcda; border: 1px solid #b0b0ae; border-radius: 3px;`}
`;

const LayerTree = styled.div`
  height: 662px;
  background: #fff;
  border: 1px solid #b0b0ae;
  border-left: 0;
`;

const LayerRow = styled.div<{ $selected?: boolean; $muted?: boolean }>`
  height: 19px;
  display: flex;
  align-items: center;
  padding-left: 23px;
  font-weight: 700;
  font-size: 14.4px;
  letter-spacing: 0.15px;
  color: ${(p) => (p.$selected ? "#e9f6ff" : p.$muted ? "#82827f" : "#000")};
  background: ${(p) => (p.$selected ? "#3a91c2" : "transparent")};
  font-style: ${(p) => (p.$muted ? "italic" : "normal")};
  u { text-underline-offset: 2px; text-decoration-thickness: 1px; }
`;

const LayerSymbol = styled.span`
  width: 16px;
  margin: 0 4px 0 6px;
  display: flex;
  justify-content: center;
`;

const TabStrip = styled.div`
  display: flex;
  align-items: flex-start;
  height: 29px;
`;

const DockTab = styled.div<{ $w: number; $active?: boolean }>`
  width: ${(p) => p.$w}px;
  height: ${(p) => (p.$active ? 27 : 25)}px;
  display: flex;
  align-items: center;
  justify-content: center;
  border: 1px solid #bcbcba;
  border-top-color: ${(p) => (p.$active ? "transparent" : "#bcbcba")};
  border-left-width: ${(p) => (p.$active ? 0 : 1)}px;
  border-radius: 0 0 3px 3px;
  background: ${(p) => (p.$active ? "linear-gradient(#eeeeec,#f8f8f6)" : "#dcdcda")};
`;

const MapFrame = styled.section`
  width: 794px;
  height: 741px;
  margin-left: 6px;
  background: #fff;
  border: 1px solid #b8b8b6;
  border-top: 0;
  overflow: hidden;
`;

const StylingPanel = styled.aside`
  width: 464px;
  padding: 0 2px 0 9px;
  display: flex;
  flex-direction: column;
`;

const StylingBody = styled.div`
  display: flex;
  margin-top: 6px;
`;

const SideStrip = styled.div`
  width: 38px;
  height: 685px;
  background: #5c5c5a;
  flex: none;
`;

const SideTab = styled.div<{ $active?: boolean }>`
  height: 32px;
  display: flex;
  align-items: center;
  justify-content: center;
  padding-right: ${(p) => (p.$active ? 0 : 8)}px;
  background: ${(p) => (p.$active ? "#eeeeec" : "transparent")};
`;

const Form = styled.div`
  width: 411px;
  margin-left: 3px;
  display: flex;
  flex-direction: column;
`;

const Row = styled.div<{ $h?: number; $mt?: number; $gap?: number }>`
  display: flex;
  align-items: center;
  flex: none;
  height: ${(p) => p.$h ?? 25}px;
  margin-top: ${(p) => p.$mt ?? 0}px;
  gap: ${(p) => p.$gap ?? 0}px;
`;

const RowLabel = styled.span<{ $w?: number }>`
  width: ${(p) => p.$w ?? 60}px;
  flex: none;
`;

const Push = styled.span<{ $w?: number }>`
  ${(p) => (p.$w ? `width: ${p.$w}px; flex: none;` : "flex: 1;")}
`;

const TabBar = styled.div`
  display: flex;
  align-items: flex-end;
  height: 31px;
  margin-top: 6px;
`;

const StyleTab = styled.div<{ $active?: boolean; $w?: number }>`
  width: ${(p) => p.$w ?? 48}px;
  height: ${(p) => (p.$active ? 31 : 29)}px;
  margin-bottom: ${(p) => (p.$active ? 0 : 1)}px;
  padding-right: ${(p) => (p.$active ? 4 : 6)}px;
  padding-bottom: ${(p) => (p.$active ? 2 : 0)}px;
  display: flex;
  align-items: center;
  justify-content: center;
  background: ${(p) => (p.$active ? "#fdfdfc" : "#e0e0de")};
  border: 1px solid #b8b8b6;
  border-right-width: ${(p) => (p.$active ? 1 : 0)}px;
  border-bottom-color: ${(p) => (p.$active ? "#fdfdfc" : "#b8b8b6")};
  border-radius: 3px 3px 0 0;
  font-size: 9.6px;
  font-weight: 700;
`;

const TabScroll = styled.div<{ $w: number; $off?: boolean }>`
  width: ${(p) => p.$w}px;
  height: 31px;
  display: flex;
  align-items: center;
  justify-content: center;
  border: 1px solid ${(p) => (p.$off ? "#d4d4d2" : "#b0b0ae")};
  border-radius: 3px;
  background: #f6f6f4;
`;

const SwatchButton = styled.div`
  ${fieldBase}
  width: 297px;
  height: 28px;
  padding: 0 4px;
  background: linear-gradient(#fcfcfb, #f2f2f0);
`;

const Swatch = styled.div`
  flex: 1;
  height: 16px;
  border-radius: 3px;
  background: #a50a30;
`;

const SwatchMenu = styled.div`
  ${fieldBase}
  width: 12px;
  height: 28px;
  justify-content: center;
  background: #f8f8f6;
`;

const SliderTrack = styled.div`
  width: 205px;
  height: 14px;
  margin-left: 1px;
  display: flex;
  align-items: center;
`;

const SliderFill = styled.div`
  flex: 1;
  height: 5px;
  border: 1px solid #2f82b8;
  background: #4aa2d6;
  border-radius: 2px;
`;

const SliderKnob = styled.div`
  width: 13px;
  height: 13px;
  margin-right: 1px;
  border: 1px solid #acacaa;
  border-radius: 3px;
  background: #fdfdfc;
`;

const StyleList = styled.div`
  width: 405px;
  height: 200px;
  margin-top: 4px;
  flex: none;
  background: #fff;
  border: 1px solid #b4b4b2;
`;

const DataDefined = ({ yellow }: { yellow?: boolean }) => (
  <svg width="22" height="18" viewBox="0.5 0 22 18" fill="none">
    <path d="M0 8.5L5 3V14Z" fill="#6a6a68" />
    {yellow ? (
      <><rect x="5" y="1" width="12" height="15" fill="#f6ea4c" stroke="#b9a81c" strokeWidth="1.2" /><path d="M9 13Q7 11 8.500 8L10.500 4Q12 2.500 13.500 4Q14.500 6 13 8L11 11.500M13 4.500L9 12M11 6L9 10Q8.500 13 10.500 13.500Q13 13 14 9" stroke="#4a4a30" strokeWidth="0.9" /></>
    ) : (
      <><rect x="5" y="1" width="12" height="15" fill="#f8f8f6" stroke="#7a7a78" strokeWidth="1.2" /><path d="M7.5 5H14.5M5 8.5H17M7.5 12H14.5" stroke="#5a5a58" strokeWidth="1.2" /></>
    )}
    <path d="M15 12.5H22L18.5 16.5Z" fill="#4a4a48" />
  </svg>
);

/* ---------- map ---------- */

const buildings = [
  "389,171 434,171 431,182 421,184 410,183 407,180 388,178",
  "650,170 718,170 716,186 690,184 683,186 676,183 651,185",
  "328,403 338,404 338.500,398.500 355.500,400.500 352,436.500 325,434.500",
  "391.500,372.500 416,375 415.500,385 416.500,386 413.500,416 409,418 405,419 401,416 400,415 385.500,413.500 388.500,382.500 390.500,382",
  "461,368.500 480,370.500 472,419.500 454.500,417.500 455.500,401 447,400 448.500,384.500 459.500,386",
  "530.500,382.500 542.500,384 539,422.500 527,421.500",
  "452.500,443 461,438.500 501.500,443.500 498,470.500 457.500,465 451,460",
  "509.500,445 535,448 523.500,551.500 498,548.500 499.500,529.500 497.500,529 499.500,509.500 502,509",
  "270.500,482.500 303.500,485.500 301,510.500 268.500,507.500",
  "334,498 346,499.500 345,514 332.500,513",
  "324,577.500 338.500,579 336.500,602 322,600.500",
  "361.500,605 377.500,607 376.500,620.500 360.500,618.500",
  "306,624.500 334,627.500 330.500,661.500 303,658.500",
  "259,669.500 284.500,671.500 281,710.500 254.500,708.500",
  "248,638 251,639 250,651 248,652",
  "432,717.500 450.500,718.500 449,744 430.500,742.500",
  "547.500,650 567.500,650.500 564.500,708.500 559.500,708.500 558.500,731.500 563,732 562,752 543,751 543.500,731.500 529.500,730.500 530.500,709.500 538.500,709 544,704 546,680 540,679.500 540.500,668.500 547,668.500",
  "594.500,614.500 622,615.500 619.500,681.500 604.500,681.500 605.500,644.500 598,644.500 598,633 594,633",
  "631,604.500 646,605.500 644,655 629.500,654",
  "664.500,579.500 682,579.500 681,630.500 666.500,630.500 666.500,612 663,612",
  "689.500,591.500 715.500,592.500 714.500,621.500 688.500,620.500",
  "725.500,548.500 740.500,549 738,612.500 731.500,612.500 731.500,595 726.500,595 726,583.500 725,583",
  "742.500,565 752.500,565 751.500,593.500 741.500,593.500",
  "758,531.500 772.500,532 771.500,563.500 757,563",
  "782,526 808.500,526.500 805,627 787.500,626 790,560 782,560",
  "821.500,500.500 838,500.500 836.500,521 820.500,520.500",
  "820.500,521 836.500,521.500 833.500,583 817.500,582.500",
  "863,528 881.500,529.500 879,547 880,557 879,559 861.500,557.500 863,553",
  "851.500,558.500 858,559 857.500,565 851,564.500",
  "941.500,528.500 967.500,529.500 966.500,559 940.500,557",
  "954,558.500 966.500,559 965.500,580.500 947,579.500 948,569.500 953,569.500",
  "969,567 979,567.500 977,603 967.500,602",
  "983.500,531 1016.500,532.500 1015.500,562.500 1007.500,562.500 1006.500,569.500 982,567.500",
  "1000,756.500 1026,758.500 1024,790 1014,790 1013,795 1008,795 1007,792 998,791",
  "1024,822.500 1033,822.500 1032.500,832.500 1023,832",
  "874,875.500 895.500,877 894,893.500 873,892",
  "505.500,765 544,770 541.500,789.500 504,784.500",
  "380.500,767 403,768.500 398.500,828 376.500,826.500",
  "331,800.500 351,801.500 349,857.500 329,856.500",
  "274,817.500 297.500,818.500 294.500,866.500 286,866 286.500,850.500 272.500,849.500",
  "370.500,856.500 397,858 395.500,885.500 377,884.500 375,887.500 370,888 366,886 365,880 369,877",
  "450,863.500 490.500,865 490,880.500 449.500,879",
  "444.500,886 458,887 456.500,903.500 443,902.500",
  "314,896 347,897 346,912 313,912",
  "506.500,895 535.500,897.500 534.500,912 505,912",
];

const labels: [string, number, number, number][] = [
  ["14261/83A", 375, 181, 66], ["13165/97", 655, 182.500, 58], ["13676/71A", 308, 423, 66], ["12970/77A", 369, 400, 66],
  ["2561/75", 440, 398.500, 50], ["11370/73", 448, 459, 57], ["2560/71", 265, 634, 50], ["2559/69", 262, 690, 50],
  ["2575/40", 527, 706, 50], ["2576/42", 567, 640, 50], ["2577/44", 638, 640.500, 50], ["2578/46", 629.500, 600.500, 50],
  ["2580/50", 702, 611, 50], ["2581/52", 689, 573, 50], ["2582/54", 721.500, 544.500, 50], ["2583/56", 753, 584.500, 50],
  ["2584/58", 804.500, 515, 50], ["2585/64", 929, 548, 50], ["2586/66", 999, 546, 50], ["2216/1", 990, 779.500, 42],
  ["7184/34", 364, 802, 50], ["13637/32", 312, 834, 57], ["2574/30", 261, 842, 50], ["12789/34A", 349, 876.500, 66],
  ["13885/13G", 297, 907.500, 66],
];

const MapCanvas = () => (
  <svg width="792" height="740" viewBox="250 170 792 740">
    <g fill="#86bd6e" stroke="#222c1e" strokeWidth="1" strokeLinejoin="round">{buildings.map((p) => <polygon key={p} points={p} />)}</g>
    <g fill="none" stroke="#f08c0e" strokeWidth="4.4" strokeLinejoin="round">
      <path d="M246 783L808 448L1014 324L1046 308" />
      <path d="M808 448L943 405Q968 401 990 403.500Q1006 405 1014 410L1036 426L1044 439" />
      <path d="M1014 324L1018 359L1036 426" />
      <path d="M1014 324L1046 345" />
    </g>
    <g fill="#a0003c" fontSize="13" fontWeight="700">
      {labels.map(([t, x, y, w]) => <text key={t} x={x} y={y} textLength={w} lengthAdjust="spacingAndGlyphs">{t}</text>)}
    </g>
    <path d="M624 597.500V616M614.500 607H633" stroke="#fff" strokeWidth="3.400" />
    <path d="M624 598V615.500M615 607H632.500" stroke="#111" strokeWidth="1.600" />
    <path d="M250 170.500H1042" stroke="#b8b8b6" />
  </svg>
);

/* ---------- status bar ---------- */

const StatusBar = styled.footer`
  height: 31px;
  display: flex;
  align-items: center;
  padding-left: 3px;
  font-size: 12.6px;
`;

const Locator = styled.div`
  ${fieldBase}
  width: 268px;
  height: 25px;
  padding-left: 7px;
  gap: 7px;
  font-size: 14.2px;
  letter-spacing: 0.2px;
  color: #80807e;
  background: #fff;
  margin-right: 300px;
`;

const StatusLabel = styled.span<{ $w: number; $ls?: number }>`
  width: ${(p) => p.$w}px;
  flex: none;
  letter-spacing: ${(p) => p.$ls ?? -0.4}px;
  white-space: nowrap;
`;

const StatusIcon = styled.span<{ $w: number }>`
  width: ${(p) => p.$w}px;
  flex: none;
  display: flex;
  justify-content: center;
`;

const Tight = styled.span<{ $ls: number }>`
  letter-spacing: ${(p) => p.$ls}px;
`;

const SizeGrip = () => (
  <svg width="11" height="11" viewBox="0 0 11 11" fill="#b0b0ae"><path d="M9 1H10V2H9ZM6 4H7V5H6ZM9 4H10V5H9ZM3 7H4V8H3ZM6 7H7V8H6ZM9 7H10V8H9ZM0 10H1V11H0ZM3 10H4V11H3ZM6 10H7V11H6ZM9 10H10V11H9Z" /></svg>
);

const Desktop = styled.div`
  height: 7px;
  background: repeating-linear-gradient(97deg, #3e3d14 0 17px, #363812 22px 41px, #423f18 49px 60px);
  border-top: 1px solid #2c2c10;
`;

const SearchGlyph = () => (
  <svg width="14" height="14" viewBox="0 0 14 14" fill="none" stroke="#8e8e8c" strokeWidth="1.3"><circle cx="5.500" cy="5.500" r="4.300" /><path d="M8.800 8.800L13 13" /></svg>
);

const menus: [string, string, string, number, number][] = [
  ["Pro", "j", "ect", 62, 0.1], ["", "E", "dit", 41, -0.1], ["", "V", "iew", 48, 0.2], ["", "L", "ayer", 51, 0], ["", "S", "ettings", 71, 0.15], ["", "P", "lugins", 64, 0],
  ["Vect", "o", "r", 59, 0.2], ["", "R", "aster", 57, 0.1], ["", "D", "atabase", 78, 0.05], ["", "W", "eb", 46, 0.2], ["", "M", "esh", 51, 0], ["Pro", "c", "essing", 88, 0], ["", "H", "elp", 40, 0],
];

export default function App() {
  return (
    <Window>
      <Global />
      <TitleBar>
        <WindowTitle>*qgis_tips&amp;tricks — QGIS</WindowTitle>
        <WindowButtons>
          <svg width="84" height="20" viewBox="0 0 84 20" fill="none">
            <path d="M2 13.500H10" stroke="#c4c4c2" strokeWidth="1.200" /><rect x="36.500" y="7.500" width="7" height="7" stroke="#b4b4b2" />
            <circle cx="74" cy="11" r="9" fill="#686866" /><path d="M70.500 7.500L77.500 14.500M77.500 7.500L70.500 14.500" stroke="#fff" strokeWidth="1.800" />
          </svg>
        </WindowButtons>
      </TitleBar>
      <MenuBar>
        {menus.map(([a, b, c, w, ls]) => <MenuItem key={a + b + c} $w={w} $ls={ls}>{a}<u>{b}</u>{c}</MenuItem>)}
      </MenuBar>
      <ToolBar>
        <Grip first /><FileTools /><Grip /><NavTools /><Grip /><AttributeTools />
      </ToolBar>
      <ToolBar>
        <Grip first /><DataTools /><Grip /><EditTools /><Grip /><SelectTools /><Grip /><LabelTools />
        <Overflow>»</Overflow><Grip /><WebTools /><Grip /><PluginTools /><Grip />
        <Tool><Svg><rect x="2" y="1.500" width="20" height="21" fill="#5f8ec0" stroke="#2f4760" /><rect x="2" y="1.500" width="5" height="21" fill="#2f4050" /><text x="14.500" y="16.500" fontSize="14" fill="#fff" textAnchor="middle" fontFamily="Liberation Serif">?</text></Svg></Tool>
        <Grip /><Grip />
        <Tool><Svg><rect width="24" height="24" fill="#6cb350" /><circle cx="14" cy="9.500" r="6.300" fill="#8cc878" stroke="#fff" strokeWidth="2.200" /><path d="M9.500 14L3 21" stroke="#fff" strokeWidth="3.200" /></Svg></Tool>
        <Overflow>»</Overflow>
      </ToolBar>
      <ToolBar>
        <Grip first /><SnapTools />
        <Field $w={104} $h={23} $off $pad={5}>12<SpinEnd off /></Field>
        <Push $w={1} />
        <Combo $w={110} $h={25} $off>px<Triangle c="#c0c0be" /></Combo>
        <TopologyTools /><Push $w={3} /><Grip />
        <Tool><Svg><path d="M3 1V21H23M1 4L3 1L5 4M20 19L23 21L20 23" stroke="#5a5a58" strokeWidth="1.200" /><path d="M6 5H21V18H6Z" fill="#f8f8f8" stroke="#d4d4d2" strokeWidth="0.600" /><path d="M5 16Q10 16 13 12Q15 5 22 3" stroke="#c8286c" strokeWidth="1.600" /><path d="M5 18.500Q11 18.500 14 15Q17 12 22 13.500" stroke="#5c98cc" strokeWidth="1.300" /></Svg></Tool>
        <Grip />
        <Tool><Svg><path d="M0 4H24M0 12H24M0 20H24" stroke="#000" strokeWidth="3" /><rect x="3" y="1.500" width="5" height="5" fill="#d9622e" stroke="#000" strokeWidth="1.800" /><rect x="15" y="9.500" width="5" height="5" fill="#f3e03c" stroke="#000" strokeWidth="1.800" /><rect x="3" y="17.500" width="5" height="5" fill="#3c8c3c" stroke="#000" strokeWidth="1.800" /></Svg></Tool>
      </ToolBar>

      <Main>
        <LayersPanel>
          <PanelHeader><Push $w={3} /><PanelTitle>Layers</PanelTitle><DockButtons /><Push $w={2} /></PanelHeader>
          <LayersTools>
            <SmallTool $w={24} $pressed><Brush s={16} /></SmallTool>
            <SmallTool $w={27}><Svg s={16}><path d="M2 8H14V22H2ZM6 4H18V18M10 1H22V15M13 1V8H16" stroke="#6a6a68" strokeWidth="1.500" /><rect x="14" y="14" width="9" height="9" fill="#589a5c" /><path d="M18.500 15.500V21.500M15.500 18.500H21.500" stroke="#fff" strokeWidth="1.600" /></Svg></SmallTool>
            <SmallTool $w={24}><Svg s={18}><path d="M0 11Q11 1 22 11Q11 20 0 11Z" fill="#fff" stroke="#8e8e8c" strokeWidth="1.500" /><circle cx="11" cy="11" r="5" fill="#6c9ccc" stroke="#35506c" /><circle cx="11" cy="11" r="2" fill="#222" /><path d="M17 18H24L20.500 22Z" fill="#444" /></Svg></SmallTool>
            <SmallTool $w={24} $pressed><Svg s={18}><path d="M3 2H21V6L14.500 13V20L9.500 22V13L3 6Z" fill="#5f8ec0" stroke="#44709e" /><path d="M3 1.500H21V6H3Z" fill="#ecd83c" stroke="#9a8a20" /></Svg></SmallTool>
            <SmallTool $w={26}><Svg s={17}><text x="-1" y="14" fontSize="22" fill="#5c3c6c" fontFamily="DejaVu Sans">ε</text><path d="M12 13H24V19L21 24H20V17H16V24H15L12 19Z" fill="#a4a4a2" /></Svg></SmallTool>
            <SmallTool $w={12}><Triangle /></SmallTool>
            <SmallTool $w={25}><Svg s={17}><path d="M3 2V20H8M3 2H14M3 11H8" stroke="#8a8a88" strokeWidth="1.500" /><g fill="#f6d9a8" stroke="#c8802c" strokeWidth="1.300"><rect x="5" y="6" width="5" height="5" /><rect x="5" y="15" width="5" height="5" /></g><path d="M14 2H19V13H23L16.500 22L10 13H14Z" fill="#5f8ec0" stroke="#35608c" /></Svg></SmallTool>
            <SmallTool $w={25}><Svg s={17}><path d="M3 2V20H8M3 2H14M3 11H8" stroke="#8a8a88" strokeWidth="1.500" /><g fill="#f6d9a8" stroke="#c8802c" strokeWidth="1.300"><rect x="5" y="6" width="5" height="5" /><rect x="5" y="15" width="5" height="5" /></g><path d="M14 22H19V11H23L16.500 2L10 11H14Z" fill="#5f8ec0" stroke="#35608c" /></Svg></SmallTool>
            <SmallTool $w={24}><Svg s={16}><rect x="2" y="2" width="17" height="17" stroke="#7a7a78" strokeWidth="1.600" fill="#f6f6f4" /><rect x="13" y="15" width="9" height="8" rx="2" fill="#d04c5c" /><path d="M15 19H20.500" stroke="#fff" strokeWidth="2" /></Svg></SmallTool>
          </LayersTools>
          <LayerTree>
            <LayerRow><Check on /><LayerSymbol><svg width="14" height="4"><rect width="14" height="4" rx="1" fill="#d9775a" /></svg></LayerSymbol>osm_roads_presov</LayerRow>
            <LayerRow $selected><Check on /><LayerSymbol><svg width="16" height="16"><rect x="0.500" y="0.500" width="15" height="15" fill="#5ba56e" stroke="#3f7c60" /><path d="M1 4L12 15M1 9L7 15M4 1L15 12M9 1L15 7" stroke="#74b46c" /></svg></LayerSymbol><Push $w={2} /><u>osm_buildings_presov</u></LayerRow>
            <LayerRow $muted><Check /><LayerSymbol><svg width="14" height="13"><rect width="14" height="13" fill="#c4d4e4" /><path d="M0 0H5V4H0ZM9 0H14V4H9ZM5 4H9V9H5ZM0 9H4V13H0ZM9 9H13V13H9Z" fill="#33475c" /></svg></LayerSymbol><Push $w={3} />OpenStreetMap</LayerRow>
          </LayerTree>
          <TabStrip><DockTab $w={67} $active>Layers</DockTab><DockTab $w={81}>Browser</DockTab></TabStrip>
        </LayersPanel>

        <MapFrame><MapCanvas /></MapFrame>

        <StylingPanel>
          <PanelHeader><Push $w={1} /><PanelTitle>Layer Styling</PanelTitle><DockButtons /></PanelHeader>
          <Combo $w={452} $h={25}>
            <svg width="17" height="13" viewBox="0 0 17 13"><path d="M1 8Q0 2 3 1.500Q6 3 9 2.500Q12 1 14 1.500Q17 2 15.500 8Q14 10 12 8.500Q8 7 6 10.500Q3 13 1 8Z" fill="#e4e4e2" stroke="#8e8e8c" /></svg>
            <Push $w={2} /><Value>osm_buildings_presov</Value><Triangle />
          </Combo>
          <StylingBody>
            <SideStrip>
              <SideTab><Brush s={22} /></SideTab>
              <SideTab $active><Svg><g transform="translate(0 4)"><Tag fill="#a8cc84" stroke="#6c9a4c" color="#4c6c3c" /></g></Svg></SideTab>
              <SideTab><svg width="24" height="16" viewBox="0 0 24 16"><path d="M4 4Q8 4 9 1Q12 -0.500 14 3.500Q19 2.500 22 5Q24 9 22 12Q19 14.500 14 13.500Q8 15 4 13.500Q0 13 0.500 9Q0.500 5 4 4Z" fill="#eef2f8" /><text x="12" y="12" fontSize="11.500" fontWeight="700" textAnchor="middle" textLength="20" fill="#3c4650">abc</text></svg></SideTab>
              <SideTab><Svg><path d="M12 1L22 7L12 13L2 7Z" fill="#f08080" stroke="#8c1020" strokeWidth="1.200" /><path d="M2 7L12 13V23L2 17Z" fill="#8ce03c" stroke="#406c18" strokeWidth="1.200" /><path d="M22 7L12 13V23L22 17Z" fill="#f3dc3c" stroke="#8a7420" strokeWidth="1.200" /></Svg></SideTab>
              <SideTab><Svg><path d="M5 15V6H19V15M10 6V16H14V6" stroke="#d9883c" strokeWidth="1.500" /><rect x="7" y="1" width="10" height="7" fill="#d8404c" /><rect x="1" y="15" width="9" height="7" fill="#f3dc4c" stroke="#c49a30" strokeWidth="0.800" /><rect x="13" y="15" width="9" height="7" fill="#84b4e4" stroke="#c4883c" strokeWidth="0.800" /></Svg></SideTab>
              <SideTab><Svg s={22}><g transform="scale(.66)"><Undo c="#5c9c6c" flip s={24} /></g><g transform="translate(9 8) scale(.62)"><path d="M3 9.500L11 3V7C18 7 21 10 21 14.500C21 18 18 20 13 20V16.500C15.500 16.500 16.500 15.500 16.500 14C16.500 12.300 14.500 11.800 11 11.800V16Z" fill="#d9703c" /></g></Svg></SideTab>
            </SideStrip>
            <Form>
              <Row>
                <Combo $w={381}><Svg s={15}><g transform="translate(0 3)"><path d="M0.500 9L5.500 2.500H23.500V15.500H5.500Z" fill="#f6e95c" stroke="#b9a81c" strokeWidth="1.500" /><text x="13.500" y="12.500" fontSize="9.500" fontWeight="700" textAnchor="middle" fill="#33332c">abc</text></g></Svg><Push $w={4} /><Value>Single Labels</Value><Triangle /></Combo>
                <Push />
                <SquareButton><Svg s={17}><path d="M1 6L6 1L12 6L7 11Z" fill="#4f7fb4" stroke="#2f4760" /><circle cx="15" cy="15" r="6" fill="#f3e03c" stroke="#c4a51c" strokeWidth="2.500" strokeDasharray="3 1.500" /><circle cx="15" cy="15" r="2" fill="#fff" stroke="#c4a51c" /></Svg></SquareButton>
              </Row>
              <Row $mt={6}>
                <RowLabel $w={45}>Value</RowLabel>
                <Field $w={336} $pad={3}><svg width="17" height="14"><text x="0" y="9" fontSize="9" fontWeight="600" fill="#555" textLength="16">abc</text></svg><Push $w={3} /><Value $ls={-0.1}>addr:housenumber</Value><FieldEnd $w={21}><Triangle /></FieldEnd></Field>
                <Push />
                <SquareButton><svg width="14" height="18"><text x="2" y="14" fontSize="17" fill="#5c3c6c" fontFamily="DejaVu Sans">ε</text></svg></SquareButton>
              </Row>
              <TabBar>
                <StyleTab $active>abc</StyleTab>
                <StyleTab><Svg><text x="8" y="8" fontSize="9.500" fontWeight="700" fill="#444">ab</text><text x="14" y="21" fontSize="9.500" fontWeight="700" fill="#333">c</text><path d="M2 5H7M4.500 2.500V7.500M7 13L3 15.500L7 18" stroke="#888" /></Svg></StyleTab>
                <StyleTab><Svg><path d="M4 7Q12 2 20 7Q25 12 20 17Q12 20 4 17Q-1 12 4 7Z" fill="#8cb4e4" /><text x="12" y="15" fontSize="9.500" fontWeight="700" fill="#3c3c7c" textAnchor="middle">abc</text></Svg></StyleTab>
                <StyleTab><Svg><path d="M5 7Q12 3 19 7Q24 12 19 16.500Q12 19 5 16.500Q0 12 5 7Z" fill="#f6fafc" stroke="#a4b0bc" /><text x="12" y="15" fontSize="9" fontWeight="700" fill="#444" textAnchor="middle">abc</text></Svg></StyleTab>
                <StyleTab><Svg s={22}><path d="M3 4Q8 1 12 3Q16 1 21 4L20 8H4Z" fill="#c4283c" stroke="#702030" /><path d="M3 7H21Q23 14 18 18Q14 19 12 21Q10 19 6 18Q1 14 3 7Z" fill="#2f7cae" stroke="#1c4c70" /></Svg></StyleTab>
                <StyleTab><Svg s={22}><path d="M5 7L9 5Q13 7 18 5L22 9Q23 16 18 19L15 21L8 18Z" fill="#6a6a68" /><path d="M3 5Q8 5 11 2.500Q14 5 19 5Q22 13 17 16L11.500 19L5 16Q0 12 3 5Z" fill="#eef4fa" stroke="#8ea4bc" /></Svg></StyleTab>
                <StyleTab><Svg><text x="12" y="9" fontSize="10" fontWeight="700" fill="#333" textAnchor="middle">abc</text><path d="M13 11L6 21" stroke="#333" strokeWidth="1.600" /></Svg></StyleTab>
                <StyleTab $w={45}><Svg s={20}><path d="M12 1L16 5L12 9L8 5ZM12 15L16 19L12 23L8 19ZM5 8L9 12L5 16L1 12ZM19 8L23 12L19 16L15 12Z" fill="#6a8cb0" stroke="#3f5c7c" /></Svg></StyleTab>
                <TabScroll $w={15} $off><svg width="5" height="8"><path d="M5 0V8L0 4Z" fill="#b8b8b6" /></svg></TabScroll>
                <TabScroll $w={15}><svg width="5" height="8"><path d="M0 0V8L5 4Z" fill="#4a4a48" /></svg></TabScroll>
              </TabBar>
              <Row $mt={9} $h={20}><RowLabel>Text</RowLabel></Row>
              <Row $mt={5}><RowLabel>Font</RowLabel><Field $w={309}><Value>Ubuntu</Value><FieldEnd $w={21}><Triangle /></FieldEnd></Field><Push $w={10} /><DataDefined /></Row>
              <Row $mt={13}><RowLabel>Style</RowLabel><Combo $w={309} $h={25}><Value>Bold</Value><Triangle /></Combo><Push $w={10} /><DataDefined /></Row>
              <Row $mt={8} $h={24}>
                <RowLabel />
                <SquareButton><u>U</u></SquareButton><Push $w={10} /><DataDefined /><Push $w={10} /><SquareButton><s>S</s></SquareButton><Push $w={10} /><DataDefined />
                <Push $w={97} /><SquareButton $off><b>B</b></SquareButton><Push $w={10} /><DataDefined /><Push $w={10} /><SquareButton $off><i>I</i></SquareButton><Push $w={10} /><DataDefined />
              </Row>
              <Row $mt={8} $h={23}><RowLabel>Size</RowLabel><Field $w={309} $h={23}><Value $ls={0.05}>10,0000</Value><SpinEnd /></Field><Push $w={10} /><DataDefined /></Row>
              <Row $mt={8}><RowLabel /><Combo $w={309}><Value>Points</Value><Triangle /></Combo><Push $w={10} /><DataDefined /></Row>
              <Row $mt={7} $h={28}><RowLabel>Color</RowLabel><SwatchButton><Swatch /></SwatchButton><SwatchMenu><Triangle /></SwatchMenu><Push $w={10} /><DataDefined yellow /></Row>
              <Row $mt={7} $h={23}><RowLabel>Opacity</RowLabel><SliderTrack><SliderFill /><SliderKnob /></SliderTrack><Push $w={3} /><Field $w={100} $h={23}><Value $ls={0.05}>100,0 %</Value><SpinEnd upOff /></Field><Push $w={10} /><DataDefined /></Row>
              <Row $mt={9} $h={20} $gap={5}><Check /><Value $ls={0.1}>Allow HTML formatting</Value></Row>
              <Row $mt={14}>
                <Field $w={375} $pad={9}><SearchGlyph /><Push $w={6} /><Value>CTT</Value><Push />
                  <svg width="13" height="10" viewBox="0 0 13 10"><path d="M0 5L4 0H13V10H4Z" fill="#7e7e7c" /><path d="M6 2.500L11 7.500M11 2.500L6 7.500" stroke="#fff" strokeWidth="1.200" /></svg>
                  <Push $w={9} /><FieldEnd $w={21}><Triangle /></FieldEnd>
                </Field>
                <Push $w={10} /><Palette s={16} />
              </Row>
              <StyleList />
              <Row $mt={5}>
                <SquareButton $pressed><Svg s={18}><rect x="2" y="2" width="20" height="20" fill="#e4edf6" /><path d="M4 4H8V8H4ZM10 4H14V8H10ZM16 4H20V8H16ZM4 10H8V14H4ZM10 10H14V14H10ZM16 10H20V14H16ZM4 16H8V20H4ZM10 16H14V20H10ZM16 16H20V20H16Z" fill="#7ca4d0" /></Svg></SquareButton>
                <Push $w={4} /><Table s={17} /><Push />
                <TextButton $w={114}><Value $ls={0.2}>Save Settings…</Value></TextButton><Push $w={6} />
              </Row>
              <Row $mt={6}>
                <SquareButton><Undo s={16} /></SquareButton><Push $w={6} /><SquareButton><Undo s={16} flip c="#6cac74" /></SquareButton>
                <Push /><Check on /><Push $w={5} />Live update<Push $w={13} />
                <TextButton $w={80}><svg width="17" height="17" viewBox="0 0 17 17"><circle cx="8.500" cy="8.500" r="8" fill="#2c9c3c" /><path d="M4.500 8.500L7.500 11.500L12.500 6" stroke="#fff" strokeWidth="1.600" fill="none" /></svg>Apply</TextButton>
              </Row>
            </Form>
          </StylingBody>
        </StylingPanel>
      </Main>

      <StatusBar>
        <Locator><SearchGlyph />Type to locate (Ctrl+K)</Locator>
        <StatusLabel $w={64} $ls={-0.5}>Coordinate</StatusLabel>
        <Field $w={137} $h={23} $pad={8}><Tight $ls={-0.45}>2369370.6,6278992.3</Tight></Field>
        <StatusIcon $w={24}><Svg s={17}><path d="M3 6Q1 2 6 2L10 6Q14 4 15 8Q20 10 20 15Q19 22 12 22Q8 21 7 16Q3 14 4 10Z" fill="#f8f8f6" stroke="#333" strokeWidth="1.800" /><path d="M5 4L12 13M10 6L13 11M4 9L8 14M11 16Q15 19 17 13M17 6L23 1" stroke="#333" strokeWidth="1.800" /></Svg></StatusIcon>
        <Push $w={9} /><StatusLabel $w={32}>Scale</StatusLabel>
        <Field $w={96} $h={25} $pad={3}><Tight $ls={-0.2}>1:1990</Tight><FieldEnd $w={20}><Triangle /></FieldEnd></Field>
        <Push $w={7} /><StatusIcon $w={24}><svg width="14" height="16" viewBox="0 0 14 16"><path d="M3 8V5Q3 1.200 7 1.200Q11 1.200 11 5V8" fill="none" stroke="#7a7a78" strokeWidth="1.600" /><rect x="1" y="7" width="12" height="8.500" rx="1" fill="#5c5c5a" /></svg></StatusIcon>
        <Push $w={3} /><StatusLabel $w={56} $ls={-0.5}>Magnifier</StatusLabel>
        <Field $w={98} $h={24}><Tight $ls={-0.4}>100%</Tight><SpinEnd /></Field>
        <Push $w={9} /><StatusLabel $w={57} $ls={-0.4}>Rotation</StatusLabel>
        <Field $w={94} $h={23}><Tight $ls={-0.3}>0,0 °</Tight><SpinEnd /></Field>
        <Push $w={6} /><Check on /><Push $w={5} /><StatusLabel $w={55} $ls={-0.5}>Render</StatusLabel>
        <svg width="15" height="15" viewBox="0 0 15 15" fill="none"><path d="M7.500 0.500L14.500 5L14 10L7.500 14.500L1 10L0.500 5Z" fill="#8e8e8c" stroke="#555" strokeWidth="0.800" /><path d="M0.500 7.500H14.500M7.500 0.500V14.500M2 4.500H13M2 10.500H13M4.500 2V13M10.500 2V13" stroke="#eee" strokeWidth="0.800" /></svg>
        <Push $w={2} /><StatusLabel $w={82} $ls={-0.45}>EPSG:3857</StatusLabel>
        <svg width="18" height="16" viewBox="0 0 18 16"><path d="M9 0.500Q17 1 17 7Q17 10 14.500 11.500L16.500 15.500L10.500 13Q1 13.500 1 7Q1 1 9 0.500Z" fill="#5c5c5a" /><path d="M4.500 7H6.500M8 7H10M11.500 7H13.500" stroke="#fff" strokeWidth="2" /></svg>
        <Push $w={16} /><SizeGrip />
      </StatusBar>
      <Desktop />
    </Window>
  );
}
